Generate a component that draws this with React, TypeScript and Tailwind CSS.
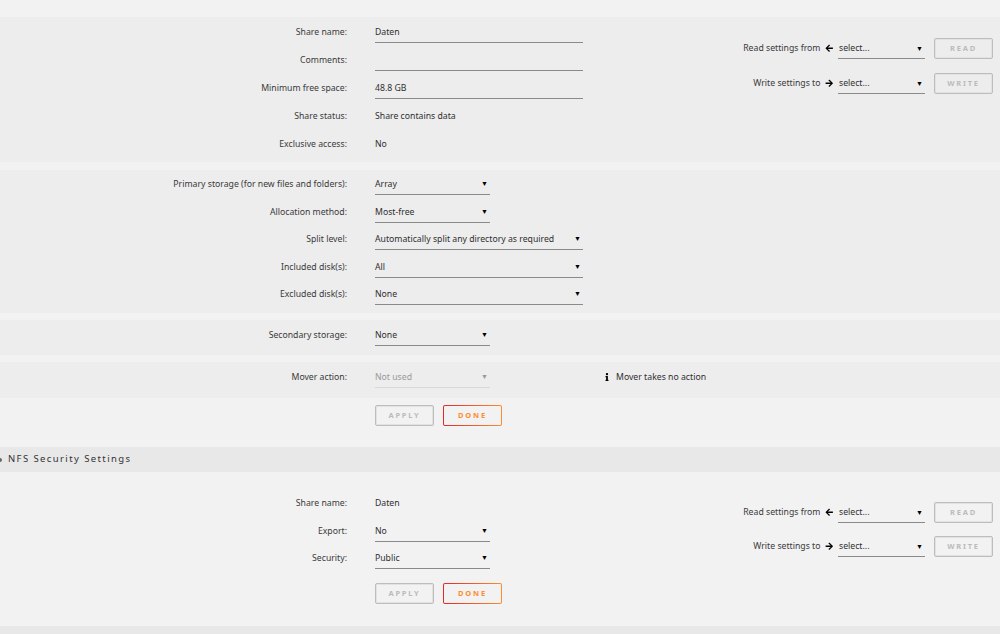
import React from 'react'
import { FaArrowLeft, FaArrowRight, FaInfo } from 'react-icons/fa'

const font = { fontFamily: '"Noto Sans", "Open Sans", sans-serif' }

const Row = ({ label, h = 'h-[28px]', children }: { label: string; h?: string; children: React.ReactNode }) => (
    <div className={`flex items-start ${h}`}>
        <div className='w-[347px] shrink-0 text-right pt-[8px] leading-[12px] text-[#3a3a3a]'>{label}</div>
        <div className='ml-[28px]'>{children}</div>
    </div>
)

const Text = ({ children }: { children: React.ReactNode }) => (
    <div className='pt-[8px] leading-[12px] text-[#2f2f2f]'>{children}</div>
)

const Input = ({ value }: { value: string }) => (
    <div className='w-[208px] pt-[8px] pb-[4px] leading-[12px] h-[25px] border-b border-[#8a8a8a] text-[#2f2f2f]'>{value}</div>
)

const Select = ({ value, wide, disabled }: { value: string; wide?: boolean; disabled?: boolean }) => (
    <div className={`flex justify-between items-start pt-[8px] pb-[4px] pr-[2px] h-[25px] leading-[12px] border-b ${wide ? 'w-[208px]' : 'w-[115px]'} ${disabled ? 'border-[#d8d8d8] text-[#999]' : 'border-[#8a8a8a] text-[#2f2f2f]'}`}>
        <span>{value}</span>
        <span className={`text-[7px] leading-[12px] ${disabled ? 'text-[#999]' : 'text-black'}`}>▼</span>
    </div>
)

const Btn = ({ label, done }: { label: string; done?: boolean }) =>
    done ? (
        <div className='w-[59px] h-[21px] rounded-[2px] p-[1px] bg-[linear-gradient(to_right,#e22828,#ff8c2f)]'>
            <div className='w-full h-full rounded-[1px] bg-[#f2f2f2] flex items-center justify-center text-[7.5px] font-bold tracking-[1.8px] text-[#ff8c2f]'>{label}</div>
        </div>
    ) : (
        <div className='w-[59px] h-[21px] rounded-[2px] border border-[#bdbdbd] shadow-[inset_0_0_0_1px_#e2e2e2] flex items-center justify-center text-[7.5px] font-bold tracking-[1.8px] text-[#bbb]'>{label}</div>
    )

const SettingRow = ({ label, read }: { label: string; read?: boolean }) => (
    <div className='flex items-center justify-end h-[21px]'>
        <span className='text-[#3a3a3a]'>{label}</span>
        {read
            ? <FaArrowLeft className='text-[8.5px] text-black ml-[4px] mr-[5px]' />
            : <FaArrowRight className='text-[8.5px] text-black ml-[4px] mr-[5px]' />}
        <div className='w-[87px] flex justify-between items-center h-[21px] pt-[2px] border-b border-[#8a8a8a] text-[#2f2f2f] pl-[1px] pr-[2px]'>
            <span>select...</span>
            <span className='text-[7px] text-black'>▼</span>
        </div>
        <div className='ml-[9px]'><Btn label={read ? 'READ' : 'WRITE'} /></div>
    </div>
)

const Settings = ({ gap }: { gap: string }) => (
    <div className={`flex flex-col ${gap}`}>
        <SettingRow label='Read settings from' read />
        <SettingRow label='Write settings to' />
    </div>
)

export default function App() {
    return (
        <div style={font} className='w-[1000px] h-[634px] overflow-hidden bg-[#f2f2f2] text-[8.7px] pt-[17px]'>
            {/* share settings */}
            <div className='bg-[#ededed] flex justify-between pt-[1px] pb-[4px] pr-[7px]'>
                <div>
                    <Row label='Share name:'><Input value='Daten' /></Row>
                    <Row label='Comments:'><Input value='' /></Row>
                    <Row label='Minimum free space:'><Input value='48.8 GB' /></Row>
                    <Row label='Share status:'><Text>Share contains data</Text></Row>
                    <Row label='Exclusive access:'><Text>No</Text></Row>
                </div>
                <div className='pt-[20px]'>
                    <Settings gap='gap-[14px]' />
                </div>
            </div>

            <div className='bg-[#ededed] mt-[8px] pb-[5.5px]'>
                <Row h='h-[27.5px]' label='Primary storage (for new files and folders):'><Select value='Array' /></Row>
                <Row h='h-[27.5px]' label='Allocation method:'><Select value='Most-free' /></Row>
                <Row h='h-[27.5px]' label='Split level:'><Select wide value='Automatically split any directory as required' /></Row>
                <Row h='h-[27.5px]' label='Included disk(s):'><Select wide value='All' /></Row>
                <Row h='h-[27.5px]' label='Excluded disk(s):'><Select wide value='None' /></Row>
            </div>

            <div className='bg-[#ededed] mt-[7px] pt-[1px] pb-[6px]'>
                <Row label='Secondary storage:'><Select value='None' /></Row>
            </div>

            <div className='bg-[#ededed] mt-[7px] pt-[1px] pb-[7px] flex items-start'>
                <Row label='Mover action:'><Select disabled value='Not used' /></Row>
                <div className='ml-[113px] h-[28px] flex items-center text-[#2f2f2f]'>
                    <FaInfo className='text-[8px] text-black mr-[5px]' />
                    <span className='leading-[12px]'>Mover takes no action</span>
                </div>
            </div>

            <div className='flex gap-[9px] ml-[375px] mt-[7px]'>
                <Btn label='APPLY' />
                <Btn label='DONE' done />
            </div>

            {/* NFS */}
            <div className='mt-[21px] h-[25px] bg-[#e8e8e8] flex items-center'>
                <span className='w-[2px] h-[4px] bg-[#666] rounded-r-[2px] mr-[6px]'></span>
                <span className='text-[9.5px] tracking-[1.4px] text-[#333]'>NFS Security Settings</span>
            </div>

            <div className='flex justify-between pr-[7px]'>
                <div className='pt-[17px]'>
                    <Row h='h-[27.5px]' label='Share name:'><Text>Daten</Text></Row>
                    <Row h='h-[27.5px]' label='Export:'><Select value='No' /></Row>
                    <Row h='h-[27.5px]' label='Security:'><Select value='Public' /></Row>
                    <div className='flex gap-[9px] ml-[375px] mt-[11.5px]'>
                        <Btn label='APPLY' />
                        <Btn label='DONE' done />
                    </div>
                </div>
                <div className='pt-[30px]'>
                    <Settings gap='gap-[13px]' />
                </div>
            </div>

            <div className='mt-[22px] h-[30px] bg-[#e8e8e8]'></div>
        </div>
    )
}
